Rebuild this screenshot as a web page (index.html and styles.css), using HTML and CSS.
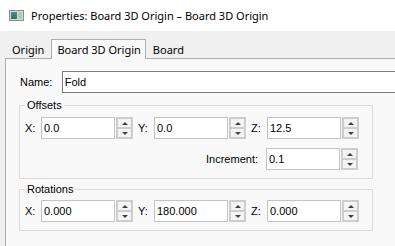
FILE: index.html
```html
<!DOCTYPE html>
<html lang="en">

<head>
    <meta charset="UTF-8">
    <title>Properties: Board 3D Origin</title>
    <link rel="stylesheet" href="styles.css">
</head>

<body>
    <div class="window">
        <!-- Title bar -->
        <div class="titlebar">
            <svg class="app-icon" width="15" height="11" viewBox="0 0 15 11">
                <defs>
                    <linearGradient id="ig" x1="0" y1="0" x2="0" y2="1">
                        <stop offset="0" stop-color="#3b8f9c"/>
                        <stop offset="1" stop-color="#2f7a46"/>
                    </linearGradient>
                </defs>
                <rect x="0.5" y="0.5" width="14" height="10" fill="#dcdcdc" stroke="#8a8a8a"/>
                <rect x="2" y="2" width="6" height="7" fill="url(#ig)"/>
                <rect x="9" y="2" width="2" height="7" fill="#b9c4c0"/>
                <rect x="11" y="2" width="2" height="7" fill="#9fd69a"/>
            </svg>
            <span class="title">Properties: Board 3D Origin – Board 3D Origin</span>
        </div>

        <!-- Tabs -->
        <div class="tabs">
            <div class="tab">Origin</div>
            <div class="tab active">Board 3D Origin</div>
            <div class="tab">Board</div>
        </div>

        <!-- Tab page -->
        <div class="panel">
            <div class="name-row">
                <label class="name-label">Name:</label>
                <input class="name-input" type="text" value="Fold">
            </div>

            <fieldset class="group">
                <legend>Offsets</legend>
                <div class="row">
                    <label class="axis">X:</label>
                    <input class="num" type="text" value="0.0">
                    <div class="spin"><span class="spin-btn up"></span><span class="spin-btn down"></span></div>
                    <label class="axis">Y:</label>
                    <input class="num" type="text" value="0.0">
                    <div class="spin"><span class="spin-btn up"></span><span class="spin-btn down"></span></div>
                    <label class="axis">Z:</label>
                    <input class="num" type="text" value="12.5">
                    <div class="spin"><span class="spin-btn up"></span><span class="spin-btn down"></span></div>
                </div>
                <div class="row increment-row">
                    <label class="increment-label">Increment:</label>
                    <input class="num" type="text" value="0.1">
                    <div class="spin"><span class="spin-btn up"></span><span class="spin-btn down"></span></div>
                </div>
            </fieldset>

            <fieldset class="group rotations">
                <legend>Rotations</legend>
                <div class="row">
                    <label class="axis">X:</label>
                    <input class="num" type="text" value="0.000">
                    <div class="spin"><span class="spin-btn up"></span><span class="spin-btn down"></span></div>
                    <label class="axis">Y:</label>
                    <input class="num" type="text" value="180.000">
                    <div class="spin"><span class="spin-btn up"></span><span class="spin-btn down"></span></div>
                    <label class="axis">Z:</label>
                    <input class="num" type="text" value="0.000">
                    <div class="spin"><span class="spin-btn up"></span><span class="spin-btn down"></span></div>
                </div>
            </fieldset>
        </div>
    </div>
</body>

</html>
```

FILE: styles.css
```css
body {
    margin: 0;
    padding: 0;
    overflow: hidden;
    font-family: 'Liberation Sans', Arial, sans-serif;
    font-size: 11px;
    color: #000;
}

.window {
    width: 395px;
    height: 246px;
    overflow: hidden;
    background-color: #f0f0f0;
    display: flex;
    flex-direction: column;
}

/* Title bar */
.titlebar {
    height: 31px;
    flex-shrink: 0;
    display: flex;
    align-items: center;
    padding-left: 9px;
    background-color: #fff;
    font-family: 'Noto Sans', sans-serif;
    font-size: 11px;
    white-space: nowrap;
}

.app-icon {
    margin-right: 7px;
    flex-shrink: 0;
}

/* Tabs */
.tabs {
    display: flex;
    align-items: flex-end;
    height: 19px;
    margin-top: 8px;
    padding-left: 5px;
    font-family: 'Noto Sans', sans-serif;
    font-size: 11px;
    position: relative;
    z-index: 1;
}

.tab {
    height: 16px;
    line-height: 16px;
    padding: 0 7px;
    white-space: nowrap;
}

.tab.active {
    height: 20px;
    line-height: 16px;
    padding: 2px 4px 0 5px;
    box-sizing: border-box;
    border: 1px solid #adadad;
    border-bottom: none;
    background-color: #f9f9f9;
    margin-bottom: -1px;
}

/* Tab page */
.panel {
    flex: 1;
    margin-left: 5px;
    width: 420px;
    border-top: 1px solid #adadad;
    border-left: 1px solid #adadad;
    background-color: #f9f9f9;
    padding: 12px 0 0 13px;
}

.name-row {
    display: flex;
    align-items: center;
    height: 22px;
}

.name-label {
    width: 42px;
    padding-left: 1px;
}

.name-input {
    width: 380px;
    height: 22px;
    box-sizing: border-box;
    border: 1px solid #7a7a7a;
    background-color: #fff;
    padding: 0 2px;
    font-family: 'Liberation Sans', Arial, sans-serif;
    font-size: 11px;
    outline: none;
}

/* Group boxes */
.group {
    width: 354px;
    box-sizing: border-box;
    margin: 5px 0 0 0;
    padding: 5px 5px 8px 5px;
    border: 1px solid #dcdcdc;
}

.group.rotations {
    margin-top: 3px;
    padding-top: 4px;
}

.group legend {
    padding: 0 2px;
    line-height: 14px;
    font-size: 11px;
}

.row {
    display: flex;
    align-items: center;
}

.increment-row {
    margin-top: 9px;
    justify-content: flex-end;
    padding-right: 9px;
}

.axis {
    width: 16px;
}

.row .spin + .axis {
    margin-left: 5px;
}

.increment-label {
    margin-right: 8px;
}

.num {
    width: 74px;
    height: 22px;
    box-sizing: border-box;
    border: 1px solid #c4c4c4;
    background-color: #fff;
    padding: 0 2px;
    font-family: 'Liberation Sans', Arial, sans-serif;
    font-size: 11px;
    color: #000;
    outline: none;
}

/* Up/down buttons */
.spin {
    width: 17px;
    height: 22px;
    box-sizing: border-box;
    margin-left: 1px;
    padding: 2px;
    background-color: #cdcdcd;
    display: flex;
    flex-direction: column;
    gap: 2px;
}

.spin-btn {
    flex: 1;
    background-color: #f4f4f4;
    display: flex;
    align-items: center;
    justify-content: center;
}

.spin-btn::after {
    content: "";
    border-left: 3px solid transparent;
    border-right: 3px solid transparent;
}

.spin-btn.up::after {
    border-bottom: 3px solid #404040;
}

.spin-btn.down::after {
    border-top: 3px solid #404040;
}
```
